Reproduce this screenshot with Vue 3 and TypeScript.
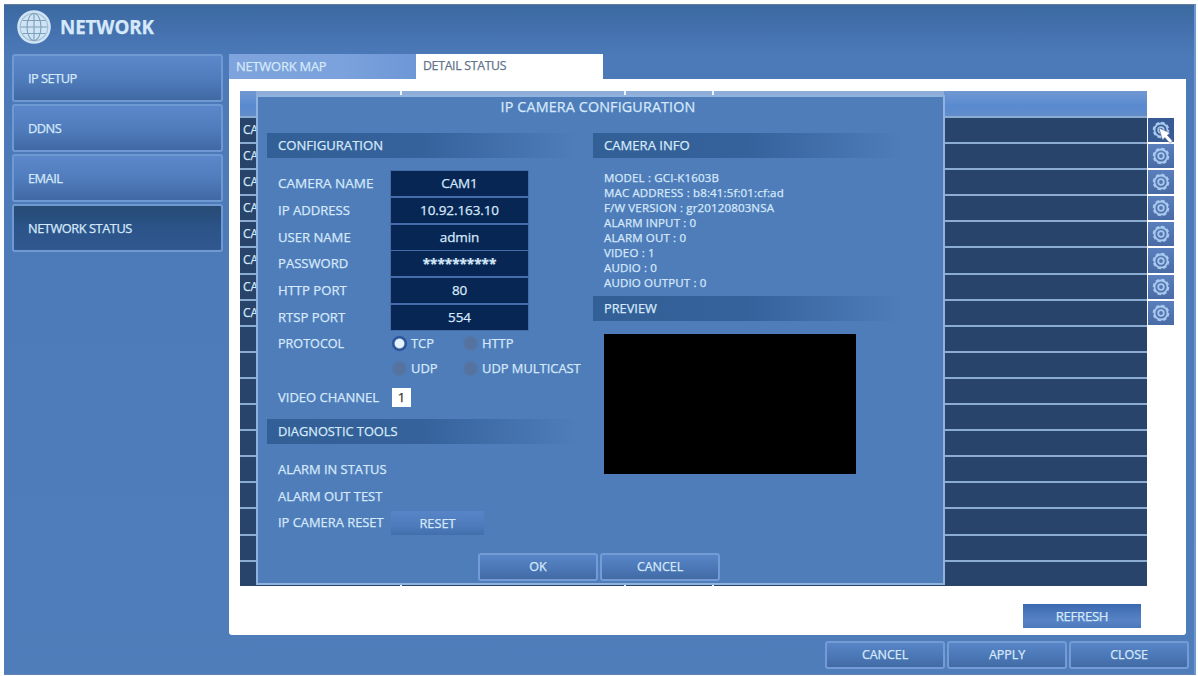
<script setup lang="ts">
const menu: string[] = ['IP SETUP', 'DDNS', 'EMAIL', 'NETWORK STATUS']
const rows: number[] = Array.from({ length: 18 }, (_, i) => i)
const fields = [
  { label: 'CAMERA NAME', value: 'CAM1' },
  { label: 'IP ADDRESS', value: '10.92.163.10' },
  { label: 'USER NAME', value: 'admin' },
  { label: 'PASSWORD', value: '**********' },
  { label: 'HTTP PORT', value: '80' },
  { label: 'RTSP PORT', value: '554' },
]
const info: string[] = [
  'MODEL : GCI-K1603B',
  'MAC ADDRESS : b8:41:5f:01:cf:ad',
  'F/W VERSION : gr20120803NSA',
  'ALARM INPUT : 0',
  'ALARM OUT : 0',
  'VIDEO : 1',
  'AUDIO : 0',
  'AUDIO OUTPUT : 0',
]
</script>

<template>
  <div class="screen">
    <header class="top">
      <svg class="globe" viewBox="0 0 34 34">
        <circle cx="17" cy="17" r="16.8" fill="#cfe4f5" />
        <g fill="none" stroke="#7f9fb8" stroke-width="1.1">
          <circle cx="17" cy="17" r="13.8" stroke="#a3bfd8" />
          <ellipse cx="17" cy="17" rx="7" ry="13.5" />
          <path d="M17 3.5v27M3.5 17h27M5.5 10.5h23M5.5 23.5h23" />
        </g>
      </svg>
      <h1>NETWORK</h1>
    </header>

    <div class="body">
      <nav class="side">
        <div v-for="(m, i) in menu" :key="m" class="item" :class="{ active: i === 3 }">{{ m }}</div>
      </nav>

      <main class="main">
        <div class="tabs">
          <div class="tab"><span>NETWORK MAP</span></div>
          <div class="tab on"><span>DETAIL STATUS</span></div>
        </div>
        <section class="panel">
          <div class="table">
            <div class="thead"><i class="c1"></i><i class="c2"></i><i class="c3"></i></div>
            <div v-for="r in rows" :key="r" class="trow">
              <div class="cell"><span v-if="r < 8">CAM{{ r + 1 }}</span></div>
              <div v-if="r < 8" class="gear" :class="{ hot: r === 0 }">
                <svg viewBox="0 0 18 18">
                  <g fill="none" stroke="#a9c8ee">
                    <circle cx="9" cy="9" r="7.4" stroke-width="1.8" stroke-dasharray="3.6 2.21" />
                    <circle cx="9" cy="9" r="6.5" stroke-width="1.8" />
                    <circle cx="9" cy="9" r="2.8" stroke-width="1.8" />
                  </g>
                </svg>
              </div>
            </div>
            <div class="tfoot"><i class="c1"></i><i class="c2"></i><i class="c3"></i></div>
          </div>
          <button class="refresh">REFRESH</button>
        </section>
      </main>
    </div>

    <footer class="bottom">
      <button class="btn">CANCEL</button>
      <button class="btn">APPLY</button>
      <button class="btn">CLOSE</button>
    </footer>

    <div class="dialog">
      <h2>IP CAMERA CONFIGURATION</h2>
      <div class="cols">
        <div class="left">
          <h3>CONFIGURATION</h3>
          <div class="fields">
            <div v-for="f in fields" :key="f.label" class="field">
              <label>{{ f.label }}</label>
              <div class="input" :class="{ pw: f.label === 'PASSWORD' }">{{ f.value }}</div>
            </div>
          </div>
          <div class="proto">
            <label>PROTOCOL</label>
            <div class="radios">
              <span class="radio"><b class="dot sel"></b>TCP</span>
              <span class="radio"><b class="dot"></b>HTTP</span>
              <span class="radio"><b class="dot"></b>UDP</span>
              <span class="radio"><b class="dot"></b>UDP MULTICAST</span>
            </div>
          </div>
          <div class="channel"><label>VIDEO CHANNEL</label><span class="chip">1</span></div>
          <h3 class="tools">DIAGNOSTIC TOOLS</h3>
          <div class="diag">
            <div class="drow"><label class="t1">ALARM IN STATUS</label></div>
            <div class="drow"><label class="t1">ALARM OUT TEST</label></div>
            <div class="drow"><label class="t2">IP CAMERA RESET</label><button class="reset">RESET</button></div>
          </div>
        </div>
        <div class="right">
          <h3>CAMERA INFO</h3>
          <div class="info"><p v-for="l in info" :key="l">{{ l }}</p></div>
          <h3 class="tools">PREVIEW</h3>
          <div class="preview"></div>
        </div>
      </div>
      <div class="actions">
        <button class="btn">OK</button>
        <button class="btn">CANCEL</button>
      </div>
    </div>

    <svg class="cursor" viewBox="0 0 16 18">
      <path d="M1 1L12 6L9.3 8.2L14.5 14L12 16.5L6.8 10.5L4.5 13Z" fill="#fff" stroke="#5b6f96" stroke-width=".6" />
    </svg>
  </div>
</template>

<style>
body { margin: 0; background: #fdfefe; overflow: hidden; }
</style>

<style scoped>
* { box-sizing: border-box; }
.screen {
  position: relative;
  width: 1192px;
  height: 671px;
  margin: 4px 0 0 4px;
  display: flex;
  flex-direction: column;
  background: linear-gradient(#3b699f 0, #4471ae 25px, #4c7ab8 52px, #4f7dba 100%);
  border-top: 1px solid #5f7f9f;
  border-bottom: 1px solid #6384ae;
  border-right: 2px solid #6e98ce;
  font-family: "Open Sans", "Noto Sans", sans-serif;
  font-size: 13.5px;
  color: #d6e9fa;
  -webkit-text-stroke: 0.25px currentColor;
}
h1, h2, h3, p { margin: 0; font-weight: 400; }
button {
  font: inherit;
  color: inherit;
  padding: 0;
  border: 0;
  white-space: nowrap;
}
.top { height: 49px; flex: none; display: flex; align-items: flex-start; padding: 5px 0 0 13px; }
.globe { width: 34px; height: 34px; }
h1 { font-size: 18.8px; font-weight: 700; line-height: 34px; margin-left: 9px; letter-spacing: -0.1px; }
.body { height: 581px; flex: none; display: flex; }
.side { width: 225px; flex: none; padding-left: 8px; display: flex; flex-direction: column; gap: 2px; }
.item {
  width: 211px;
  height: 48px;
  border: 2px solid #6f99d3;
  border-radius: 3px;
  background: linear-gradient(#5c88cb, #517dbd 50%, #4069a3);
  display: flex;
  align-items: center;
  padding-left: 14px;
  font-size: 12.8px;
  letter-spacing: -0.5px;
}
.item.active { background: linear-gradient(#264a73, #2c5489 50%, #31588f); letter-spacing: -0.45px; }
.main { width: 957px; }
.tabs { height: 25px; display: flex; font-size: 12.9px; letter-spacing: -0.2px; }
.tab { width: 187px; padding-left: 7px; line-height: 24px; background: linear-gradient(90deg, #7ea3dd, #7ba2dc 60%, #6d97d6); }
.tab.on { background: #fff; color: #5f748c; font-size: 12.3px; letter-spacing: -0.3px; }
.panel { height: 556px; background: #fff; padding: 12px 0 0 11px; border-radius: 0 0 3px 3px; }
.table { width: 936px; }
.thead, .tfoot { width: 907px; display: flex; }
.thead {
  height: 25px;
  background:
    linear-gradient(#8fadd9, #8fadd9) 16px 0 / 688px 4px no-repeat,
    linear-gradient(#7199d2, #5989cf 60%, #628dcc);
}
.thead i, .tfoot i { height: 4px; border-right: 2px solid #eef4fb; }
.c1 { width: 162px; } .c2 { width: 224px; } .c3 { width: 88px; }
.tfoot { height: 0; }
.tfoot i { margin-top: -4px; }
.trow { height: 26.1px; display: flex; gap: 1px; border-top: 2px solid #8dacd2; width: 907px; background: #28446a; }
.cell { width: 907px; flex: none; padding-left: 3px; line-height: 23px; font-size: 12px; }
.gear {
  width: 26px;
  height: 24.1px;
  flex: none;
  background: linear-gradient(#5a7fbd, #496ba5);
  display: flex;
  align-items: center;
  justify-content: center;
}
.gear.hot { background: #395b95; }
.gear svg { width: 18px; height: 18px; }
.refresh {
  display: block;
  width: 118px;
  height: 24px;
  margin: 18px 0 0 783px;
  background: linear-gradient(#3d69b1, #5783c6 70%, #4b78b9);
  font-size: 13.2px;
  line-height: 22px;
  letter-spacing: -0.3px;
}
.bottom { flex: 1; display: flex; justify-content: flex-end; gap: 2px; padding: 6px 5px 0 0; }
.btn {
  width: 120px;
  height: 28px;
  border: 2px solid #739cd6;
  border-radius: 3px;
  background: linear-gradient(#5885c6, #4a76b5 60%, #426ba4);
  font-size: 12.5px;
  line-height: 22px;
  letter-spacing: -0.05px;
}
.dialog {
  position: absolute;
  left: 252px;
  top: 90px;
  width: 689px;
  height: 490px;
  border: 2px solid #8fb2df;
  background: #4f7dba;
  padding-left: 9px;
}
h2 { font-size: 14.3px; letter-spacing: 0.15px; line-height: 20px; height: 36px; text-align: center; padding-right: 14px; }
.cols { display: flex; height: 421px; }
.left { width: 326px; flex: none; }
.right { width: 320px; }
h3 {
  height: 25px;
  line-height: 24px;
  padding-left: 11px;
  width: 310px;
  font-size: 13.1px;
  background: linear-gradient(90deg, #325f95 0, #35629b 50%, rgba(79, 125, 186, 0) 100%);
}
.tools { font-size: 12.8px; }
.fields { padding: 13px 0 0 11px; display: flex; flex-direction: column; gap: 1.8px; }
.field { display: flex; height: 25px; }
label { width: 113px; flex: none; line-height: 25px; white-space: nowrap; }
.field label { font-size: 13.1px; line-height: 24px; }
.field:first-child label { font-size: 13.5px; }
.input { width: 137px; height: 25px; background: #082654; outline: 1px solid #456da9; text-align: center; line-height: 24px; letter-spacing: -0.1px; }
.input.pw { font-weight: 700; line-height: 26px; letter-spacing: 0; }
.proto { display: flex; padding-left: 11px; height: 54px; margin-top: 1px; font-size: 12.6px; }
.radios { display: grid; grid-template-columns: 71px 130px; grid-template-rows: 25px 25px; white-space: nowrap; }
.radio { display: flex; align-items: center; gap: 3px; font-size: 12.9px; }
.dot { width: 17px; height: 17px; border-radius: 50%; background: radial-gradient(circle closest-side, #56739f 0 5.5px, #4f7dba 8.5px); }
.dot.sel { background: radial-gradient(circle closest-side, #e4f4ff 0 4.3px, #2d5798 5.5px 7px, #5b85c4 8.5px); }
.channel { display: flex; align-items: center; padding-left: 11px; height: 25px; margin-bottom: 9px; }
.channel label { font-size: 13px; }
.chip { width: 19px; height: 19px; margin-left: 1px; background: #fff; color: #333; text-align: center; line-height: 18px; font-size: 13px; }
.diag { padding: 12px 0 0 11px; }
.drow { display: flex; align-items: center; height: 26.7px; }
.t1, .t2 { font-size: 12.9px; }
.reset { width: 93px; height: 24px; line-height: 22px; background: linear-gradient(#5885c8, #4d7bbb 60%, #426eac); font-size: 12.8px; }
.info { height: 138px; padding: 12px 0 0 11px; font-size: 11.5px; letter-spacing: 0.15px; }
.info p { height: 15px; line-height: 15px; white-space: nowrap; }
.preview { width: 252px; height: 140px; margin: 13px 0 0 11px; background: #000; }
.actions { display: flex; gap: 2px; padding-left: 211px; margin-top: -1px; }
.cursor { position: absolute; left: 1154px; top: 122px; width: 16px; height: 18px; }
</style>
